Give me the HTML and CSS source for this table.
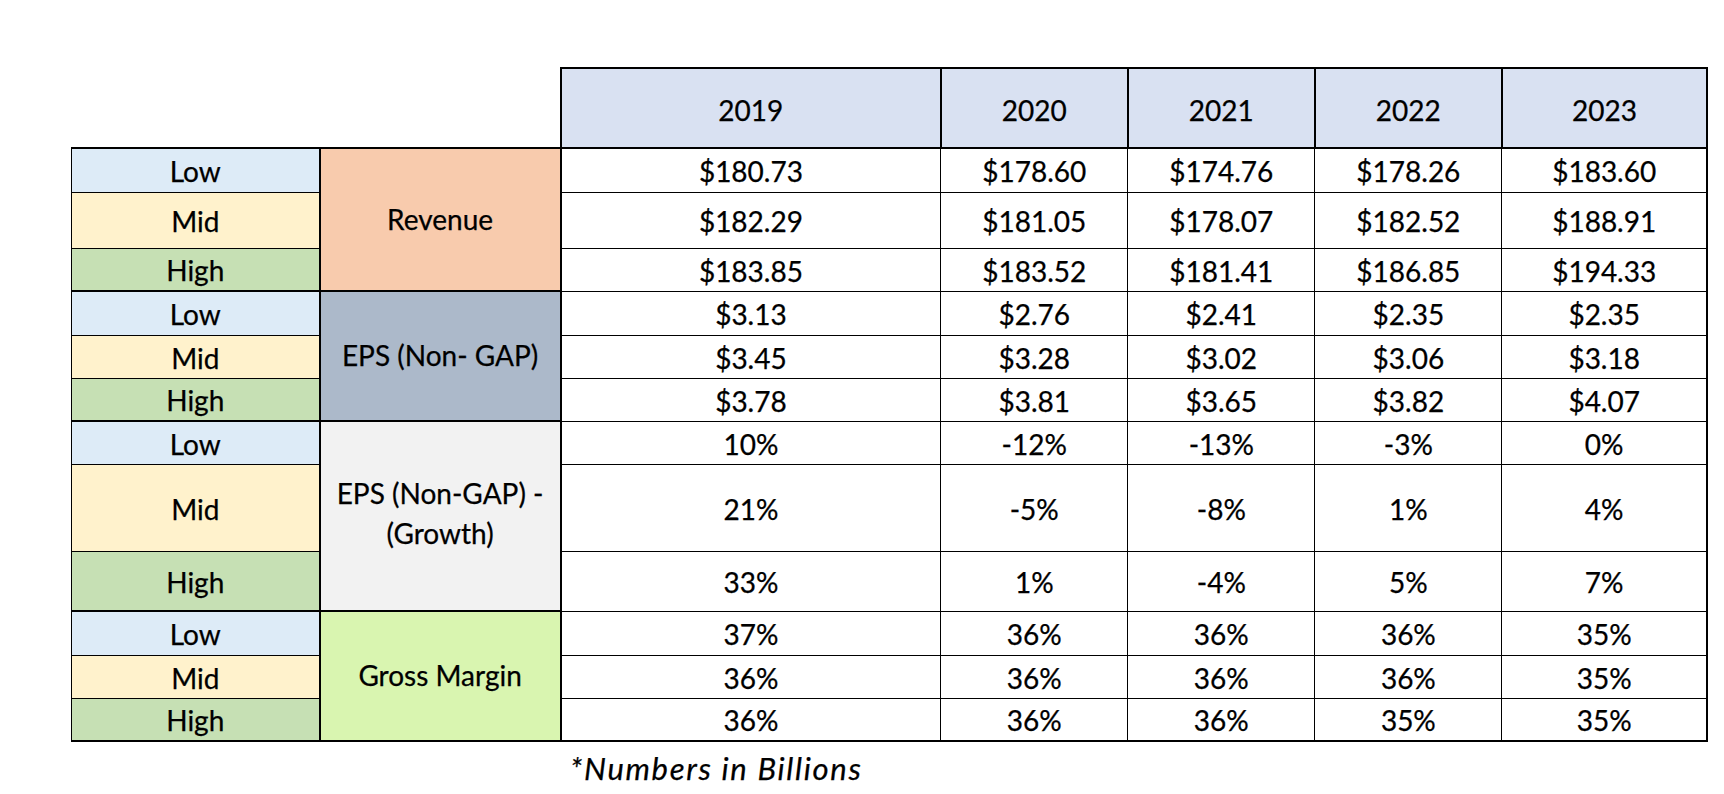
FILE: index.html
```html
<!DOCTYPE html>
<html lang="en">
<head>
<meta charset="utf-8">
<title>Guidance</title>
<link rel="stylesheet" href="styles.css">
</head>
<body>
<main class="sheet">
<table class="guidance">
  <colgroup>
    <col class="c-lvl"><col class="c-cat"><col class="c-2019"><col class="c-y"><col class="c-y"><col class="c-y"><col class="c-2023">
  </colgroup>
  <thead>
    <tr class="hdr">
      <th class="blank"></th><th class="blank"></th>
      <th>2019</th><th>2020</th><th>2021</th><th>2022</th><th>2023</th>
    </tr>
  </thead>
  <tbody>
    <tr class="h44 gs">
      <td class="lvl low">Low</td><td class="cat rev" rowspan="3">Revenue</td>
      <td>$180.73</td><td>$178.60</td><td>$174.76</td><td>$178.26</td><td>$183.60</td>
    </tr>
    <tr class="h56">
      <td class="lvl mid">Mid</td>
      <td>$182.29</td><td>$181.05</td><td>$178.07</td><td>$182.52</td><td>$188.91</td>
    </tr>
    <tr class="h43 ge">
      <td class="lvl high">High</td>
      <td>$183.85</td><td>$183.52</td><td>$181.41</td><td>$186.85</td><td>$194.33</td>
    </tr>

    <tr class="h44 gs">
      <td class="lvl low">Low</td><td class="cat eps" rowspan="3">EPS (Non- GAP)</td>
      <td>$3.13</td><td>$2.76</td><td>$2.41</td><td>$2.35</td><td>$2.35</td>
    </tr>
    <tr class="h43">
      <td class="lvl mid">Mid</td>
      <td>$3.45</td><td>$3.28</td><td>$3.02</td><td>$3.06</td><td>$3.18</td>
    </tr>
    <tr class="h43 ge">
      <td class="lvl high">High</td>
      <td>$3.78</td><td>$3.81</td><td>$3.65</td><td>$3.82</td><td>$4.07</td>
    </tr>

    <tr class="h43 gs">
      <td class="lvl low">Low</td><td class="cat growth" rowspan="3"><span class="two">EPS (Non-GAP) -<br>(Growth)</span></td>
      <td>10%</td><td>-12%</td><td>-13%</td><td>-3%</td><td>0%</td>
    </tr>
    <tr class="h87">
      <td class="lvl mid">Mid</td>
      <td>21%</td><td>-5%</td><td>-8%</td><td>1%</td><td>4%</td>
    </tr>
    <tr class="h60 ge">
      <td class="lvl high">High</td>
      <td>33%</td><td>1%</td><td>-4%</td><td>5%</td><td>7%</td>
    </tr>

    <tr class="h44 gs">
      <td class="lvl low">Low</td><td class="cat gm" rowspan="3">Gross Margin</td>
      <td>37%</td><td>36%</td><td>36%</td><td>36%</td><td>35%</td>
    </tr>
    <tr class="h43">
      <td class="lvl mid">Mid</td>
      <td>36%</td><td>36%</td><td>36%</td><td>36%</td><td>35%</td>
    </tr>
    <tr class="h43 ge last">
      <td class="lvl high">High</td>
      <td>36%</td><td>36%</td><td>36%</td><td>35%</td><td>35%</td>
    </tr>
  </tbody>
</table>
<p class="note">*Numbers in Billions</p>
</main>
</body>
</html>
```

FILE: styles.css
```css
html, body {
  margin: 0;
  padding: 0;
  background: #ffffff;
}

.sheet {
  padding: 67px 0 0 71px;
  font-family: "Lato", "Liberation Sans", sans-serif;
  color: #000000;
  -webkit-text-stroke: 0.25px #000000;
}

.guidance {
  border-collapse: collapse;
  table-layout: fixed;
  width: 1637px;
  font-size: 28px;
  line-height: 1.2;
}

.c-lvl { width: 248px; }
.c-cat { width: 241px; }
.c-2019 { width: 380px; }
.c-y { width: 187px; }
.c-2023 { width: 205px; }

.guidance th,
.guidance td {
  padding: 4px 0 0 0;
  text-align: center;
  vertical-align: middle;
  font-weight: 400;
  border: 1px solid #000000;
}

.hdr { height: 80px; }
.hdr th {
  background: #d9e1f2;
  border: 2px solid #000000;
  padding-top: 6px;
}
.hdr th.blank {
  background: transparent;
  border: none;
}

.h43 { height: 43px; }
.h44 { height: 44px; }
.h56 { height: 56px; }
.h60 { height: 60px; }
.h87 { height: 87px; }

.guidance td:last-child { border-right: 2px solid #000000; }
.lvl { border-left: 2px solid #000000; border-right: 2px solid #000000; }
.guidance td.cat { border: 2px solid #000000; padding-top: 0; }
.gs .lvl { border-top: 2px solid #000000; }
.ge .lvl { border-bottom: 2px solid #000000; }
.last td { border-bottom: 2px solid #000000; }

.low { background: #ddebf7; }
.mid { background: #fff2cc; }
.high { background: #c6e0b4; }

.rev { background: #f8cbad; }
.eps { background: #acb9ca; }
.growth { background: #f2f2f2; }
.gm { background: #d9f5b0; }

.two {
  display: inline-block;
  line-height: 40px;
  padding-bottom: 6px;
}

.note {
  margin: 9px 0 0 499px;
  font-size: 31px;
  font-style: italic;
  letter-spacing: 1.7px;
  line-height: 34px;
}
```
